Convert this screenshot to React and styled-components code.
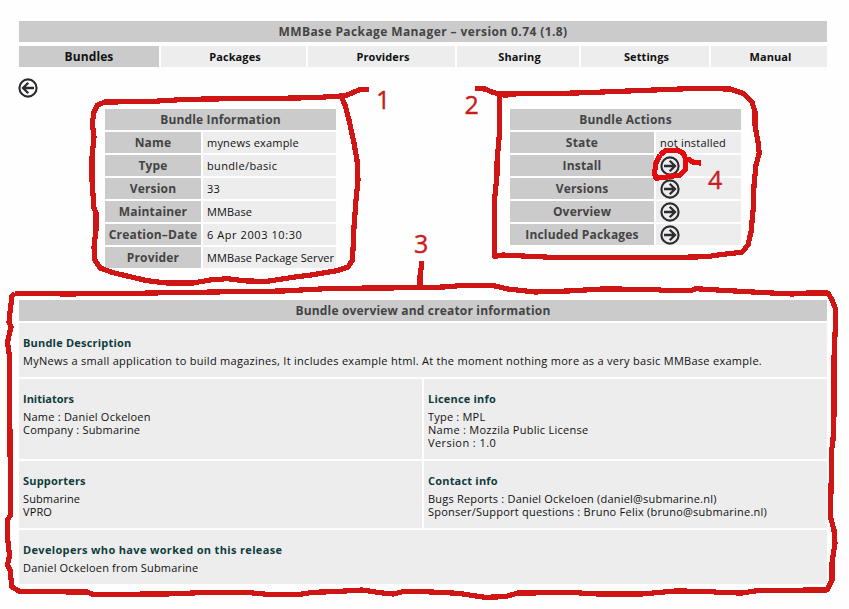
import React from "react";
import styled, { createGlobalStyle } from "styled-components";

const GlobalStyle = createGlobalStyle`
  * { box-sizing: border-box; }
  body {
    margin: 0;
    background: #fefefe;
    color: #111;
    font-family: "Open Sans", "Noto Sans", sans-serif;
    font-size: 11px;
    line-height: 13px;
  }
`;

const Page = styled.main`
  position: relative;
  width: 849px;
  height: 609px;
  padding: 21px 22px 0 19px;
  overflow: hidden;
`;

const HeaderBar = styled.div`
  height: 21px;
  background: #cbcbcb;
  color: #444;
  font-size: 12px;
  font-weight: 700;
  line-height: 22px;
  text-align: center;
  white-space: nowrap;
`;

const Tabs = styled.nav`
  display: grid;
  grid-template-columns: 140px 145px 147px 122px 128px 116px;
  column-gap: 2px;
  margin-top: 4px;
`;

const Tab = styled.a`
  height: 21px;
  padding-left: ${(p) => (p.$active ? 0 : 3)}px;
  background: ${(p) => (p.$active ? "#cbcbcb" : "#ededed")};
  color: #111;
  font-size: ${(p) => (p.$active ? 12 : 11)}px;
  font-weight: 700;
  line-height: 21px;
  text-align: center;
`;

const Text = styled.span`
  white-space: nowrap;
  letter-spacing: ${(p) => p.$track ?? 0}px;
`;

const BackLink = styled.a`
  display: flex;
  width: 20px;
  height: 20px;
  margin: 11px 0 0 -1px;
`;

const Panels = styled.div`
  display: flex;
  align-items: flex-start;
  height: 159px;
  gap: 174px;
  margin: 11px 0 0 86px;
`;

const Panel = styled.section`
  display: grid;
  width: 231px;
  row-gap: 2px;
`;

const Row = styled.div`
  display: grid;
  grid-template-columns: ${(p) => p.$label}px 1fr;
  column-gap: 2px;
`;

const Value = styled.div`
  display: flex;
  align-items: center;
  height: 21px;
  padding-left: 4px;
  background: #ededed;
`;

const Overview = styled.section`
  display: grid;
  grid-template-columns: 403px 403px;
  grid-template-rows: 21px 54px 80px 67px 54px;
  gap: 2px;
  margin-top: 32px;
`;

const OverviewTitle = styled(HeaderBar)`
  grid-column: 1 / -1;
`;

const Block = styled.article`
  grid-column: ${(p) => (p.$wide ? "1 / -1" : "auto")};
  padding: 13px 4px 0;
  background: #ededed;
`;

const BlockTitle = styled.h2`
  margin: 0 0 5px;
  color: #103c3c;
  font-size: 11px;
  font-weight: 700;
  line-height: 13px;
`;

const Line = styled.div`
  height: 13px;
`;

const Markup = styled.svg`
  position: absolute;
  inset: 0;
  pointer-events: none;
  fill: none;
  stroke: #d01515;
  stroke-width: 5.2;
  stroke-linecap: butt;
  stroke-linejoin: round;

  text {
    fill: #c91c1c;
    stroke: #c91c1c;
    stroke-width: 0.4;
    font: 25px "Open Sans", sans-serif;
  }
`;

function ArrowIcon({ left }) {
  return (
    <svg width="20" height="20" viewBox="0 0 20 20" fill="none" stroke="#2c2c30">
      <circle cx="10" cy="10" r="8.6" strokeWidth="2.1" />
      <g transform={left ? "rotate(180 10 10)" : undefined} strokeWidth="2.3">
        <path d="M4 10H15M9.7 4.8L15 10L9.7 15.2" />
      </g>
    </svg>
  );
}

const tabs = ["Bundles", "Packages", "Providers", "Sharing", "Settings", "Manual"];

const info = [
  ["Name", "mynews example", 0.2],
  ["Type", "bundle/basic", 0.35],
  ["Version", "33", 0.2],
  ["Maintainer", "MMBase", 0.1],
  ["Creation–Date", "6 Apr 2003 10:30", 0.57],
  ["Provider", "MMBase Package Server", 0.1],
];

const actions = ["Install", "Versions", "Overview", "Included Packages"];

const blocks = [
  {
    title: "Bundle Description",
    wide: true,
    lines: [
      [
        "MyNews a small application to build magazines, It includes example html. At the moment nothing more as a very basic MMBase example.",
        0.283,
      ],
    ],
  },
  {
    title: "Initiators",
    titleTrack: 0,
    lines: [["Name : Daniel Ockeloen", 0.22], ["Company : Submarine", 0.2]],
  },
  {
    title: "Licence info",
    lines: [["Type : MPL", 0.2], ["Name : Mozzila Public License", 0.27], ["Version : 1.0", 0.42]],
  },
  { title: "Supporters", lines: [["Submarine", 0.12], ["VPRO", 0.1]] },
  {
    title: "Contact info",
    lines: [
      ["Bugs Reports : Daniel Ockeloen (daniel@submarine.nl)", 0.2],
      ["Sponser/Support questions : Bruno Felix (bruno@submarine.nl)", 0.235],
    ],
  },
  {
    title: "Developers who have worked on this release",
    titleTrack: 0.34,
    wide: true,
    lines: [["Daniel Ockeloen from Submarine", 0.17]],
  },
];

function Annotations() {
  return (
    <Markup width="849" height="609" viewBox="0 0 849 609">
      <g shapeRendering="crispEdges">
        <path d="M369 89.3L359 90L347 95L341 96L313 97.7L277 98.3L210 99L187 99.3L147 101.7L105 102L97.5 105L94 112L92.3 123L94 137L92 157V180L94 208L96 213V230L94 247L95 260L100 268L113 272.7L147 280.7L167 283H193L210 280L227 278.7L247 281L267 281.3L293 277.3L313 274.7L337 270.7L348 267L352.5 260L354 227L356 200L358 180L357 160L354 143L349 120L345 105L341 96" />
        <path d="M475 88.5L485 89L493 92.5L500 94H510L577 93L610 91.7L693 88.5L730 89L743 93.3L752 102L755 112V125L758 142L759.3 153L756 165L754 185L753.3 208L751 232L748 245L742 252.3L723 254.3L707 256.7L660 257.7H560L523 256L503 255L494.5 256.5V200L497 175V162L499.3 135V94L508 96" />
        <path d="M421.5 261V266L420 276V288M15 293.3L67 294L133 293.3L233 291.7L283 291L307 289.7L333 288.3L425 287.7L450 286.7L462 285.3H492L508 289L535 292L568 291L602 289L655 289.3L665 290.7L692 290.3L696 288.7L712 289.7L758 292.3L792 294L808 293H828L832 300L835.3 308V328L834 358V415L833 440L831.7 450L830.5 517L834 530L835 543L832 563V580L827 590L760 590.3L742 593L722 592.7L708 591.3L675 591L642 594H598L575 592.7L518 593L505 596.7L485 597.3L458 593.3L425 591.7H403L393 594L380 592.7L362 590L333 591.7L313 592.3L300 594.3H267L250 592.7H200L167 594L93 594.3L87 592L20 591.7L12 587L10 570L7.5 565L9.5 556L7.5 537V520L10.5 515L10 440L9.3 355L7.5 342L11 327L9 322L10 312L12 296L15 293.3" />
        <path stroke="#e30b0d" d="M660 155L665 151L677 150L683.3 153.3L686 160L685 170L680 175L667 177L656 178.3L654.5 173L656 163L660 155M683 159L690 160L693.5 162.5L701 163" />
      </g>
      <text x="376" y="109">1</text>
      <text x="464.5" y="114">2</text>
      <text x="414" y="253">3</text>
      <text x="708" y="189">4</text>
    </Markup>
  );
}

export default function App() {
  return (
    <Page>
      <GlobalStyle />
      <HeaderBar><Text $track={0.4}>MMBase Package Manager – version 0.74 (1.8)</Text></HeaderBar>
      <Tabs>
        {tabs.map((label, i) => (
          <Tab key={label} $active={i === 0}><Text $track={0.1}>{label}</Text></Tab>
        ))}
      </Tabs>
      <BackLink><ArrowIcon left /></BackLink>
      <Panels>
        <Panel>
          <HeaderBar><Text $track={0.15}>Bundle Information</Text></HeaderBar>
          {info.map(([label, value, track]) => (
            <Row key={label} $label={96}>
              <HeaderBar><Text $track={0.18}>{label}</Text></HeaderBar>
              <Value><Text $track={track}>{value}</Text></Value>
            </Row>
          ))}
        </Panel>
        <Panel>
          <HeaderBar><Text $track={0.2}>Bundle Actions</Text></HeaderBar>
          <Row $label={144}>
            <HeaderBar><Text $track={0.18}>State</Text></HeaderBar>
            <Value><Text $track={0.2}>not installed</Text></Value>
          </Row>
          {actions.map((label) => (
            <Row key={label} $label={144}>
              <HeaderBar><Text $track={0.18}>{label}</Text></HeaderBar>
              <Value><ArrowIcon /></Value>
            </Row>
          ))}
        </Panel>
      </Panels>
      <Overview>
        <OverviewTitle><Text $track={0.17}>Bundle overview and creator information</Text></OverviewTitle>
        {blocks.map((b) => (
          <Block key={b.title} $wide={b.wide}>
            <BlockTitle><Text $track={b.titleTrack ?? 0.2}>{b.title}</Text></BlockTitle>
            {b.lines.map(([line, track]) => <Line key={line}><Text $track={track}>{line}</Text></Line>)}
          </Block>
        ))}
      </Overview>
      <Annotations />
    </Page>
  );
}
